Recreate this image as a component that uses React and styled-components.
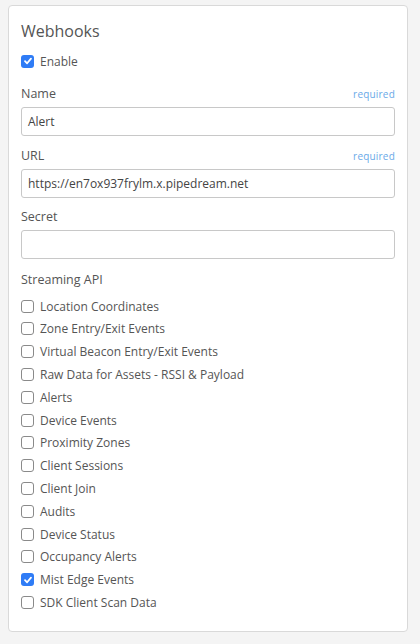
import React from 'react'
import styled, { createGlobalStyle } from 'styled-components'

const GlobalStyle = createGlobalStyle`
  html, body {
    margin: 0;
    padding: 0;
    background: #f4f4f4;
    font-family: "Open Sans", "Liberation Sans", sans-serif;
    color: #555;
  }
`

const Page = styled.div`
  padding: 5px 12px 10px 8px;
`

const Card = styled.div`
  background: #fff;
  border: 1px solid #d9d9d9;
  border-radius: 4px;
  padding: 14px 12px 24px 12px;
  height: 627px;
  box-sizing: border-box;
`

const Title = styled.h2`
  margin: 0 0 8px 0;
  font-size: 16px;
  font-weight: 400;
  color: #555;
  line-height: 22px;
`

const CheckRow = styled.label`
  display: flex;
  align-items: center;
  gap: 6px;
  height: 22.8px;
  font-size: 12px;
  color: #555;
`

const Box = styled.span`
  width: 13px;
  height: 13px;
  box-sizing: border-box;
  border-radius: 3px;
  border: ${(p) => (p.checked ? 'none' : '1px solid #8a8a8a')};
  background: ${(p) => (p.checked ? '#2f7cf6' : '#fff')};
  display: flex;
  align-items: center;
  justify-content: center;
  flex-shrink: 0;
`

const Field = styled.div`
  margin-top: ${(p) => p.top}px;
`

const LabelRow = styled.div`
  display: flex;
  justify-content: space-between;
  align-items: baseline;
  font-size: 12.5px;
  line-height: 18px;
  margin-bottom: 4px;
`

const Required = styled.span`
  font-size: 10px;
  color: #6aa9e8;
  letter-spacing: 0.2px;
`

const Input = styled.div`
  height: 29px;
  box-sizing: border-box;
  border: 1px solid #c8c8c8;
  border-radius: 3px;
  padding: 0 6px;
  display: flex;
  align-items: center;
  font-size: 12px;
  color: #444;
`

const SectionLabel = styled.div`
  font-size: 12.5px;
  line-height: 18px;
  margin-top: 12px;
  margin-bottom: 6px;
`

function Check({ checked, children }) {
  return (
    <CheckRow>
      <Box checked={checked}>
        {checked && (
          <svg width="10" height="10" viewBox="0 0 10 10">
            <path d="M2 5.2 L4.1 7.3 L8 2.6" fill="none" stroke="#fff" strokeWidth="1.8" strokeLinecap="round" strokeLinejoin="round" />
          </svg>
        )}
      </Box>
      {children}
    </CheckRow>
  )
}

const streams = [
  ['Location Coordinates', false],
  ['Zone Entry/Exit Events', false],
  ['Virtual Beacon Entry/Exit Events', false],
  ['Raw Data for Assets - RSSI & Payload', false],
  ['Alerts', false],
  ['Device Events', false],
  ['Proximity Zones', false],
  ['Client Sessions', false],
  ['Client Join', false],
  ['Audits', false],
  ['Device Status', false],
  ['Occupancy Alerts', false],
  ['Mist Edge Events', true],
  ['SDK Client Scan Data', false],
]

export default function App() {
  return (
    <Page>
      <GlobalStyle />
      <Card>
        <Title>Webhooks</Title>
        <Check checked>Enable</Check>
        <Field top={12}>
          <LabelRow>
            <span>Name</span>
            <Required>required</Required>
          </LabelRow>
          <Input>Alert</Input>
        </Field>
        <Field top={11}>
          <LabelRow>
            <span>URL</span>
            <Required>required</Required>
          </LabelRow>
          <Input>https://en7ox937frylm.x.pipedream.net</Input>
        </Field>
        <Field top={10}>
          <LabelRow>
            <span>Secret</span>
          </LabelRow>
          <Input />
        </Field>
        <SectionLabel>Streaming API</SectionLabel>
        {streams.map(([name, on]) => (
          <Check key={name} checked={on}>{name}</Check>
        ))}
      </Card>
    </Page>
  )
}
